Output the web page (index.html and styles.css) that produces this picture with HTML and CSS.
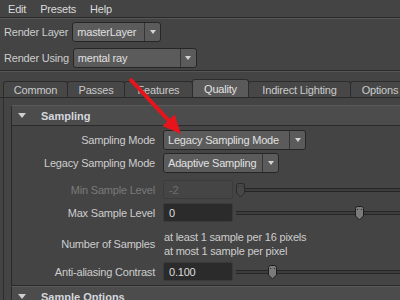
FILE: index.html
```html
<!DOCTYPE html>
<html>
<head>
<meta charset="utf-8">
<link rel="stylesheet" href="styles.css">
</head>
<body>
<div class="menubar"><span>Edit</span><span>Presets</span><span>Help</span></div>

<div class="render-settings">
  <div class="rs-row">
    <span class="rs-label">Render Layer</span>
    <div class="combo combo-layer"><span class="combo-text">masterLayer</span><span class="combo-btn"></span></div>
  </div>
  <div class="rs-row">
    <span class="rs-label">Render Using</span>
    <div class="combo combo-using"><span class="combo-text">mental ray</span><span class="combo-btn"></span></div>
  </div>
</div>

<div class="tabbar">
  <div class="tab tab-common">Common</div>
  <div class="tab tab-passes">Passes</div>
  <div class="tab tab-features">Features</div>
  <div class="tab tab-quality tab-active">Quality</div>
  <div class="tab tab-indirect">Indirect Lighting</div>
  <div class="tab tab-options">Options</div>
</div>

<div class="frame">
  <div class="section-header"><span class="tri"></span><span>Sampling</span></div>
  <div class="section-body">
    <div class="row row-mode">
      <span class="lbl">Sampling Mode</span>
      <div class="combo combo-mode"><span class="combo-text">Legacy Sampling Mode</span><span class="combo-btn"></span></div>
    </div>
    <div class="row row-legacy">
      <span class="lbl">Legacy Sampling Mode</span>
      <div class="combo combo-legacy"><span class="combo-text">Adaptive Sampling</span><span class="combo-btn"></span></div>
    </div>
    <div class="row row-min">
      <span class="lbl lbl-disabled">Min Sample Level</span>
      <div class="field field-disabled">-2</div>
      <div class="slider">
        <svg class="handle handle-disabled" style="left:-1px" width="11" height="15" viewBox="0 0 11 15"><path d="M1.5 2.5 Q1.5 0.5 3.5 0.5 H7.5 Q9.5 0.5 9.5 2.5 V10 L5.5 14 L1.5 10 Z"/><rect x="3" y="3" width="1" height="1"/><rect x="7" y="3" width="1" height="1"/></svg>
      </div>
    </div>
    <div class="row row-max">
      <span class="lbl">Max Sample Level</span>
      <div class="field">0</div>
      <div class="slider">
        <svg class="handle" style="left:118px" width="11" height="15" viewBox="0 0 11 15"><path d="M1.5 2.5 Q1.5 0.5 3.5 0.5 H7.5 Q9.5 0.5 9.5 2.5 V10 L5.5 14 L1.5 10 Z"/><rect x="3" y="3" width="1" height="1"/><rect x="7" y="3" width="1" height="1"/></svg>
      </div>
    </div>
    <div class="row row-samples">
      <span class="lbl">Number of Samples</span>
      <div class="info"><div>at least 1 sample per 16 pixels</div><div>at most 1 sample per pixel</div></div>
    </div>
    <div class="row row-aa">
      <span class="lbl">Anti-aliasing Contrast</span>
      <div class="field">0.100</div>
      <div class="slider">
        <svg class="handle" style="left:31px" width="11" height="15" viewBox="0 0 11 15"><path d="M1.5 2.5 Q1.5 0.5 3.5 0.5 H7.5 Q9.5 0.5 9.5 2.5 V10 L5.5 14 L1.5 10 Z"/><rect x="3" y="3" width="1" height="1"/><rect x="7" y="3" width="1" height="1"/></svg>
      </div>
    </div>
  </div>
  <div class="section-header"><span class="tri"></span><span>Sample Options</span></div>
</div>

<svg class="annotation" width="400" height="300" viewBox="0 0 400 300">
  <line x1="130" y1="79" x2="171" y2="123" stroke="#e8141b" stroke-width="4"/>
  <polygon points="181,134 162.5,126 174.5,114.5" fill="#e8141b"/>
</svg>
</body>
</html>
```
FILE: styles.css
```css
html, body {
  margin: 0;
  padding: 0;
}
body {
  width: 400px;
  height: 300px;
  overflow: hidden;
  position: relative;
  background: #444444;
  font-family: "Liberation Sans", Arial, sans-serif;
  font-size: 11px;
  letter-spacing: -0.2px;
  color: #cdcdcd;
}

/* menu bar */
.menubar {
  height: 17px;
  display: flex;
  align-items: center;
  gap: 14px;
  padding-left: 8px;
  border-bottom: 1px solid #2a2a2a;
  color: #dadada;
}

/* render layer / render using */
.render-settings {
  border-top: 1px solid #565656;
  border-bottom: 1px solid #2a2a2a;
  padding: 3px 0 2px 4px;
  display: flex;
  flex-direction: column;
  gap: 6px;
}
.rs-row {
  display: flex;
  align-items: center;
  gap: 4px;
  height: 20px;
}

/* combo boxes */
.combo {
  box-sizing: border-box;
  height: 20px;
  display: flex;
  align-items: center;
  background: #5b5b5b;
  border: 1px solid #262626;
  border-radius: 3px;
  color: #e0e0e0;
}
.combo-text {
  flex: 1;
  padding-left: 4px;
  white-space: nowrap;
  overflow: hidden;
}
.combo-btn {
  width: 15px;
  align-self: stretch;
  border-left: 1px solid #353535;
  display: flex;
  align-items: center;
  justify-content: center;
}
.combo-btn::after {
  content: "";
  border-left: 3.5px solid transparent;
  border-right: 3.5px solid transparent;
  border-top: 4px solid #d4d4d4;
}
.combo-layer { width: 89px; }
.combo-using { width: 124px; }
.combo-mode { width: 143px; }
.combo-legacy { width: 116px; }

/* tabs */
.tabbar {
  border-top: 1px solid #565656;
  border-bottom: 1px solid #2a2a2a;
  padding: 7px 0 0 3px;
  height: 18px;
  display: flex;
  align-items: flex-end;
  white-space: nowrap;
}
.tab {
  box-sizing: border-box;
  height: 16px;
  flex: none;
  display: flex;
  align-items: center;
  justify-content: center;
  padding-top: 1px;
  background: #474747;
  border: 1px solid #2c2c2c;
  border-bottom: none;
  border-radius: 3px 3px 0 0;
  margin-left: -1px;
  color: #cacaca;
}
.tab:first-child { margin-left: 0; }
.tab-common { width: 65px; }
.tab-passes { width: 58px; }
.tab-features { width: 69px; }
.tab-quality { width: 57px; }
.tab-indirect { width: 103px; }
.tab-options { width: 60px; }
.tab-active {
  height: 18px;
  padding-top: 0;
  background: #5a5a5a;
  color: #e2e2e2;
  position: relative;
}

/* frame & sections */
.frame {
  margin-left: 3px;
  border-left: 1px solid #2e2e2e;
  padding: 7px 0 0 7px;
}
.section-header {
  height: 19px;
  display: flex;
  align-items: center;
  padding-left: 6px;
  background: #4c4c4c;
  border-top: 1px solid #5a5a5a;
  border-bottom: 1px solid #2a2a2a;
  border-left: 1px solid #2a2a2a;
  font-weight: bold;
  letter-spacing: 0;
  color: #d4d8de;
  white-space: nowrap;
}
.tri {
  width: 0;
  height: 0;
  border-left: 4.5px solid transparent;
  border-right: 4.5px solid transparent;
  border-top: 5px solid #cfcfcf;
  margin-right: 15px;
}
.section-body {
  border-left: 1px solid #2a2a2a;
  border-bottom: 1px solid #2a2a2a;
  padding: 4px 0 4px 0;
  display: flex;
  flex-direction: column;
}

.row {
  display: flex;
  align-items: center;
  white-space: nowrap;
}
.lbl {
  flex: none;
  width: 143px;
  margin-right: 8px;
  text-align: right;
}
.lbl-disabled { color: #7a7a7a; }

.row-mode { height: 20px; }
.row-legacy { height: 20px; margin-top: 3px; }
.row-min { height: 19px; margin-top: 7px; }
.row-max { height: 19px; margin-top: 4px; }
.row-samples { height: 28px; margin-top: 8px; }
.row-aa { height: 19px; margin-top: 4px; }

.field {
  box-sizing: border-box;
  flex: none;
  width: 70px;
  height: 19px;
  display: flex;
  align-items: center;
  padding-left: 5px;
  background: #2b2b2b;
  border: 1px solid #3a3a3a;
  border-radius: 2px;
  color: #dedede;
}
.field-disabled {
  background: #454545;
  border-color: #3b3b3b;
  color: #6e6e6e;
}

.slider {
  flex: 1;
  box-sizing: border-box;
  height: 4px;
  margin-left: 3px;
  position: relative;
  background: #3d3d3d;
  border-top: 1px solid #262626;
  border-bottom: 1px solid #262626;
}
.handle {
  position: absolute;
  top: -6px;
  display: block;
}
.handle path {
  fill: #7a7a7a;
  stroke: #1e1e1e;
  stroke-width: 1;
}
.handle rect { fill: #2a2a2a; }
.handle-disabled path {
  fill: #474747;
  stroke: #2a2a2a;
}
.handle-disabled rect { fill: #2e2e2e; }

.info {
  line-height: 14px;
  padding-left: 1px;
}

/* annotation overlay */
.annotation {
  position: absolute;
  left: 0;
  top: 0;
  pointer-events: none;
}
```
